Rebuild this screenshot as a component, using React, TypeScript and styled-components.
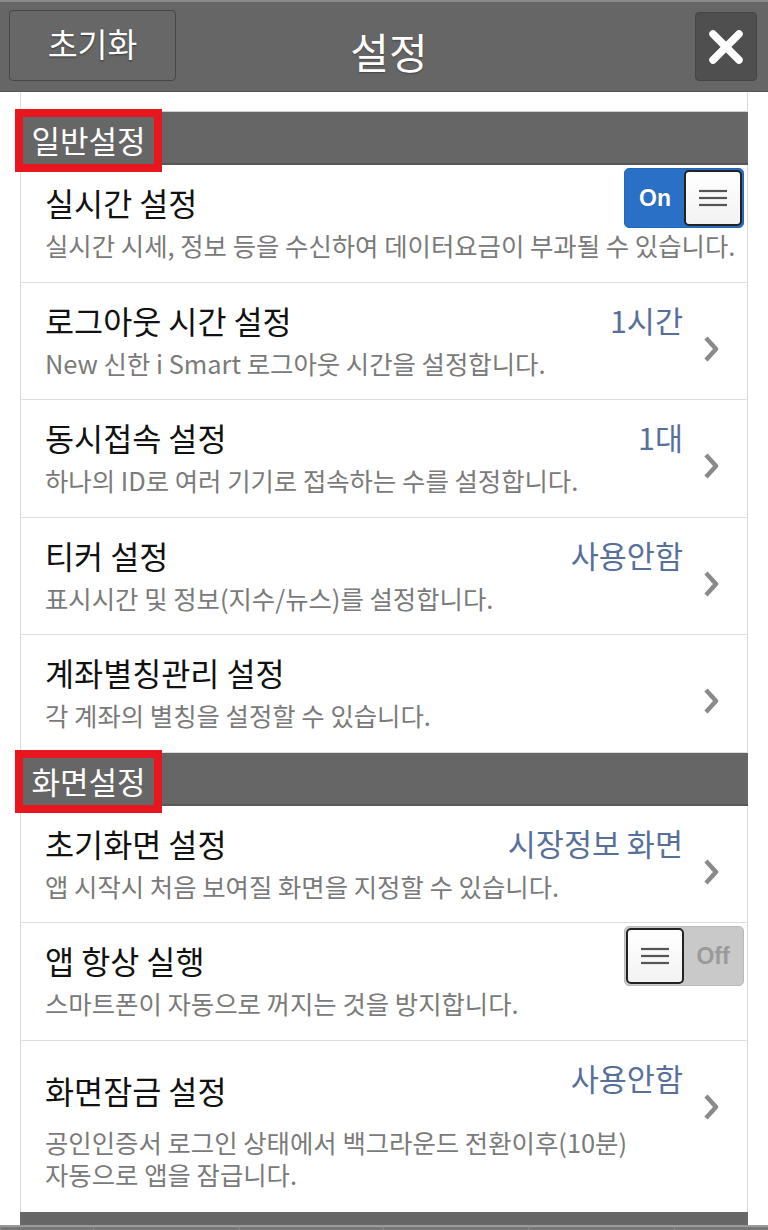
import styled, { createGlobalStyle } from 'styled-components';

const GlobalStyle = createGlobalStyle`
  html, body {
    margin: 0;
    padding: 0;
    background: #ffffff;
  }
  body {
    font-family: 'Noto Sans CJK KR', 'Noto Sans', sans-serif;
  }
`;

type Item = {
  title: string;
  desc: string[];
  value?: string;
  chevron?: boolean;
  toggle?: 'on' | 'off';
  tall?: boolean;
};

const general: Item[] = [
  { title: '실시간 설정', desc: ['실시간 시세, 정보 등을 수신하여 데이터요금이 부과될 수 있습니다.'], toggle: 'on' },
  { title: '로그아웃 시간 설정', desc: ['New 신한 i Smart 로그아웃 시간을 설정합니다.'], value: '1시간', chevron: true },
  { title: '동시접속 설정', desc: ['하나의 ID로 여러 기기로 접속하는 수를 설정합니다.'], value: '1대', chevron: true },
  { title: '티커 설정', desc: ['표시시간 및 정보(지수/뉴스)를 설정합니다.'], value: '사용안함', chevron: true },
  { title: '계좌별칭관리 설정', desc: ['각 계좌의 별칭을 설정할 수 있습니다.'], chevron: true },
];

const screen: Item[] = [
  { title: '초기화면 설정', desc: ['앱 시작시 처음 보여질 화면을 지정할 수 있습니다.'], value: '시장정보 화면', chevron: true },
  { title: '앱 항상 실행', desc: ['스마트폰이 자동으로 꺼지는 것을 방지합니다.'], toggle: 'off' },
  {
    title: '화면잠금 설정',
    desc: ['공인인증서 로그인 상태에서 백그라운드 전환이후(10분)', '자동으로 앱을 잠급니다.'],
    value: '사용안함',
    chevron: true,
    tall: true,
  },
];

const Hamburger = () => (
  <svg width="28" height="20" viewBox="0 0 28 20">
    <g stroke="#555" strokeWidth="2.2">
      <line x1="0" y1="3" x2="28" y2="3" />
      <line x1="0" y1="10" x2="28" y2="10" />
      <line x1="0" y1="17" x2="28" y2="17" />
    </g>
  </svg>
);

const Toggle = ({ on }: { on: boolean }) => (
  <Switch $on={on}>
    {on ? (
      <>
        <SwitchLabel $on>On</SwitchLabel>
        <Knob>
          <Hamburger />
        </Knob>
      </>
    ) : (
      <>
        <Knob>
          <Hamburger />
        </Knob>
        <SwitchLabel $on={false}>Off</SwitchLabel>
      </>
    )}
  </Switch>
);

const SettingRow = ({ item }: { item: Item }) => (
  <Row $tall={item.tall}>
    <TextBlock $tall={item.tall}>
      <Title>{item.title}</Title>
      <Desc $tall={item.tall}>
        {item.desc.map((line) => (
          <div key={line}>{line}</div>
        ))}
      </Desc>
    </TextBlock>
    {item.value && <Value>{item.value}</Value>}
    {item.chevron && (
      <Chevron width="16" height="28" viewBox="0 0 16 28">
        <path d="M3 3 L13 14 L3 25" fill="none" stroke="#8a8a8a" strokeWidth="4.5" strokeLinejoin="round" />
      </Chevron>
    )}
    {item.toggle && (
      <ToggleSlot>
        <Toggle on={item.toggle === 'on'} />
      </ToggleSlot>
    )}
  </Row>
);

const App = () => {
  return (
    <Page>
      <GlobalStyle />
      <TopBar>
        <ResetButton>초기화</ResetButton>
        <PageTitle>설정</PageTitle>
        <CloseButton aria-label="닫기">
          <svg width="34" height="34" viewBox="0 0 34 34">
            <g stroke="#fff" strokeWidth="7.5" strokeLinecap="round">
              <line x1="4" y1="4" x2="30" y2="30" />
              <line x1="30" y1="4" x2="4" y2="30" />
            </g>
          </svg>
        </CloseButton>
      </TopBar>

      <Panel>
        <Spacer />
        <SectionHeader>
          <SectionLabel>일반설정</SectionLabel>
        </SectionHeader>
        {general.map((item) => (
          <SettingRow key={item.title} item={item} />
        ))}
        <SectionHeader>
          <SectionLabel>화면설정</SectionLabel>
        </SectionHeader>
        {screen.map((item) => (
          <SettingRow key={item.title} item={item} />
        ))}
        <PanelFooter />
      </Panel>

      <TabBar>
        <Tab $w={93} />
        <Tab $w={146} />
        <Tab $w={144} />
        <Tab $w={145} />
        <Tab $w={146} />
        <Tab $w={94} />
      </TabBar>
    </Page>
  );
};

const Page = styled.div`
  width: 768px;
  height: 1230px;
  overflow: hidden;
  background: #ffffff;
  display: flex;
  flex-direction: column;
`;

const TopBar = styled.header`
  flex: none;
  height: 92px;
  box-sizing: border-box;
  background: #666666;
  border-top: 2px solid #8a8a8a;
  border-bottom: 1px solid #555555;
  padding: 8px 11px 0 9px;
  display: grid;
  grid-template-columns: 1fr auto 1fr;
  align-items: start;
`;

const ResetButton = styled.button`
  justify-self: start;
  width: 167px;
  height: 71px;
  box-sizing: border-box;
  background: #676767;
  border: 1.5px solid #474747;
  border-radius: 4px;
  color: #ffffff;
  font-family: 'Noto Sans CJK KR', sans-serif;
  font-size: 32.5px;
  line-height: 1;
  text-shadow: 0 1px 2px rgba(0, 0, 0, 0.5);
  padding: 0 0 4px;
  cursor: pointer;
`;

const PageTitle = styled.h1`
  margin: 0;
  padding-left: 12px;
  color: #ffffff;
  font-size: 42px;
  font-weight: 400;
  line-height: 82px;
  text-shadow: 0 1px 2px rgba(0, 0, 0, 0.35);
`;

const CloseButton = styled.button`
  justify-self: end;
  width: 62px;
  height: 69px;
  margin-top: 2px;
  box-sizing: border-box;
  background: #4f4f4f;
  border: 1.5px solid #444444;
  border-radius: 4px;
  display: flex;
  align-items: center;
  justify-content: center;
  padding: 0;
  cursor: pointer;
`;

const Panel = styled.main`
  flex: none;
  margin: 0 20px;
  border-left: 1px solid #dcdcdc;
  border-right: 1px solid #dcdcdc;
  display: flex;
  flex-direction: column;
`;

const Spacer = styled.div`
  height: 19px;
  border-bottom: 1px solid #cfcfcf;
`;

const SectionHeader = styled.div`
  height: 53px;
  box-sizing: border-box;
  margin: 0 -1px;
  background: #666666;
  border-bottom: 2px solid #575757;
  display: flex;
  align-items: flex-start;
  padding-left: 3px;
`;

const SectionLabel = styled.span`
  margin-top: 5px;
  width: 131px;
  height: 47px;
  display: flex;
  align-items: center;
  justify-content: center;
  background: #666666;
  outline: 8px solid #e8161f;
  color: #ffffff;
  font-size: 31px;
  line-height: 1;
  padding-bottom: 2px;
  box-sizing: border-box;
  white-space: nowrap;
`;

const Row = styled.div<{ $tall?: boolean }>`
  height: ${(p) => (p.$tall ? '171px' : '117.5px')};
  box-sizing: border-box;
  border-bottom: ${(p) => (p.$tall ? 'none' : '1px solid #dedede')};
  padding-left: 24px;
  display: grid;
  grid-template-columns: 1fr auto 64px;
  grid-template-rows: 100%;
`;

const TextBlock = styled.div<{ $tall?: boolean }>`
  grid-area: 1 / 1 / 2 / -1;
  padding-top: ${(p) => (p.$tall ? '29px' : '17px')};
`;

const Title = styled.div`
  color: #111111;
  font-size: 31.6px;
  line-height: 40px;
  white-space: nowrap;
`;

const Desc = styled.div<{ $tall?: boolean }>`
  margin-top: ${(p) => (p.$tall ? '16px' : '7px')};
  color: #7a7a7a;
  font-size: 25.4px;
  line-height: 32px;
  white-space: nowrap;
`;

const Value = styled.div`
  grid-area: 1 / 2 / 2 / 3;
  align-self: start;
  margin-top: 17px;
  color: #57709b;
  font-size: 30.5px;
  line-height: 40px;
  white-space: nowrap;
`;

const Chevron = styled.svg`
  grid-area: 1 / 3 / 2 / 4;
  align-self: start;
  margin: 52px 0 0 20px;
`;

const ToggleSlot = styled.div`
  grid-area: 1 / 2 / 2 / -1;
  align-self: start;
  justify-self: end;
  margin: 3px 3px 0 0;
`;

const Switch = styled.div<{ $on: boolean }>`
  width: 120px;
  height: 60px;
  box-sizing: border-box;
  border-radius: 5px;
  background: ${(p) => (p.$on ? '#2a70c6' : '#c9c9c9')};
  border: 1px solid ${(p) => (p.$on ? '#2466b8' : '#b9b9b9')};
  display: flex;
  align-items: center;
  padding: 1px;
`;

const SwitchLabel = styled.span<{ $on: boolean }>`
  flex: 1;
  text-align: center;
  font-family: 'Liberation Sans', Arial, sans-serif;
  font-weight: 700;
  font-size: 23px;
  color: ${(p) => (p.$on ? '#ffffff' : '#9a9a9a')};
  text-shadow: ${(p) => (p.$on ? '0 0 1px rgba(0,0,0,0.3)' : 'none')};
`;

const Knob = styled.div`
  width: 58px;
  height: 56px;
  box-sizing: border-box;
  background: linear-gradient(#ffffff, #f2f2f2);
  border: 2.5px solid #222222;
  border-radius: 5px;
  display: flex;
  align-items: center;
  justify-content: center;
`;

const PanelFooter = styled.div`
  height: 13px;
  margin: 0 -1px;
  background: #666666;
`;

const TabBar = styled.nav`
  flex: 1;
  display: flex;
  background: #6e6e6e;
`;

const Tab = styled.div<{ $w: number }>`
  width: ${(p) => p.$w}px;
  box-sizing: border-box;
  border-top: 2px solid #9a9a9a;
  border-left: 1px solid #8a8a8a;
  background: #777777;
`;

export default App;
